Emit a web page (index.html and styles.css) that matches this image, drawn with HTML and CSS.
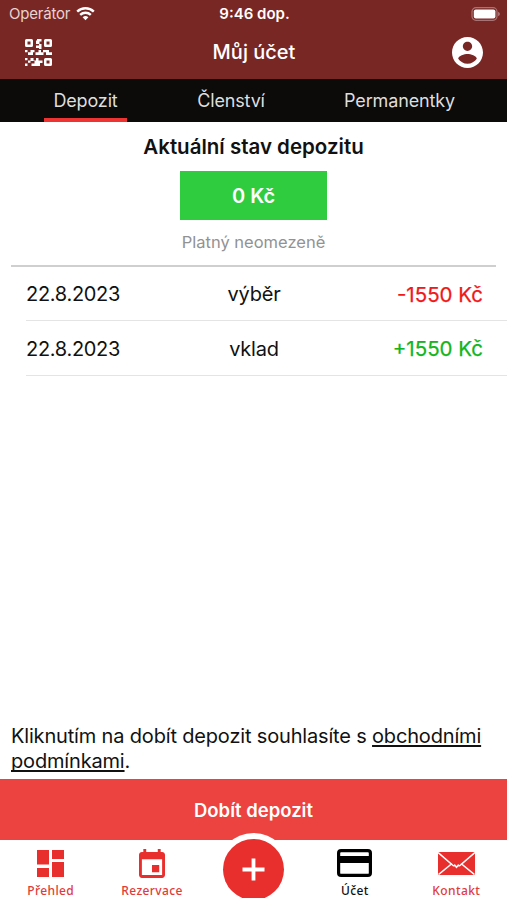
FILE: index.html
```html
<!DOCTYPE html>
<html lang="cs">
<head>
  <meta charset="UTF-8" />
  <meta name="viewport" content="width=device-width, initial-scale=1.0"/>
  <title>Můj účet</title>
  <link rel="stylesheet" href="styles.css">
</head>
<body>

  <header class="header">
    <div class="status-bar">
      <div class="carrier">
        <span>Operátor</span>
        <svg width="19" height="15" viewBox="0 0 19 15" fill="none" stroke="#fff" stroke-width="2.4">
          <path d="M1.2 5.6a12 12 0 0 1 16.6 0"/>
          <path d="M4.2 8.9a7.7 7.7 0 0 1 10.6 0"/>
          <path d="M9.5 14.2L6.6 11.3a4.2 4.2 0 0 1 5.8 0z" fill="#fff" stroke="none"/>
        </svg>
      </div>
      <span class="clock">9:46 dop.</span>
      <svg class="battery" width="31" height="14" viewBox="0 0 31 14">
        <rect x="3" y=".7" width="25" height="12.6" rx="4" fill="none" stroke="#a87372" stroke-width="1.2"/>
        <rect x="4.8" y="2.4" width="21.600" height="9.2" rx="2" fill="#fff"/>
        <path d="M29 4.8q2 .7 2 2.2t-2 2.2z" fill="#a87372"/>
      </svg>
    </div>
    <div class="title-bar">
      <svg width="27" height="27" viewBox="0 0 27 27" fill="#fff">
        <path fill-rule="evenodd" d="M1.5 0h5q1.500 0 1.500 1.500v5q0 1.500-1.500 1.500h-5q-1.500 0-1.500-1.500v-5q0-1.500 1.500-1.500zM2.500 2.500v3h3v-3z"/>
        <path fill-rule="evenodd" d="M20.500 0h5q1.500 0 1.500 1.500v5q0 1.500-1.500 1.500h-5q-1.500 0-1.500-1.500v-5q0-1.500 1.500-1.500zM21.500 2.500v3h3v-3z"/>
        <path fill-rule="evenodd" d="M20.500 19h5q1.500 0 1.500 1.500v5q0 1.500-1.500 1.500h-5q-1.500 0-1.500-1.500v-5q0-1.500 1.500-1.500zM21.500 21.500v3h3v-3z"/>
        <path d="M12 0h4.500v2.500h-2v2.500h-3.500v-3.500h1zM14 5h2.500v5h-2.500v-1h-3v-2.500h3zM0 11h2.500v2.300h-2.500zM5.500 11h4v2.300h-1.500v2.700h-5v-2.700h2.500zM10.500 13.300h3v-2.300h2.500v2.300h2.500v2.700h-8zM18 11h6v2.300h3v2.700h-6v-2.700h-3zM0 19h2.500v2.300h-2.500zM0 24.500h2.500v2.500h-2.500zM3 21.500h2.500v2.300h-2.500zM5.500 19h3v2.500h2.500v-2.500h2.500v2.500h4v2.500h-2.500v3h-8.500v-2.500h3v-2.500h-4z"/>
      </svg>
      <h1>Můj účet</h1>
      <svg width="31" height="31" viewBox="2 2 20 20" fill="#fff">
        <path d="M12 2C6.480 2 2 6.480 2 12s4.480 10 10 10 10-4.480 10-10S17.520 2 12 2zm0 3c1.660 0 3 1.340 3 3s-1.340 3-3 3-3-1.340-3-3 1.340-3 3-3zm0 14.200c-2.500 0-4.710-1.280-6-3.220.03-1.990 4-3.080 6-3.080 1.990 0 5.970 1.090 6 3.080-1.290 1.940-3.500 3.220-6 3.220z"/>
      </svg>
    </div>
  </header>

  <nav class="tabs">
    <a class="tab active">Depozit</a>
    <a class="tab membership">Členství</a>
    <a class="tab passes">Permanentky</a>
  </nav>

  <main class="content">
    <section class="deposit">
      <h2>Aktuální stav depozitu</h2>
      <div class="amount">0 Kč</div>
      <p class="validity">Platný neomezeně</p>
    </section>

    <ul class="history">
      <li>
        <span class="date">22.8.2023</span>
        <span class="type">výběr</span>
        <span class="sum minus">-1550 Kč</span>
      </li>
      <li>
        <span class="date">22.8.2023</span>
        <span class="type">vklad</span>
        <span class="sum plus">+1550 Kč</span>
      </li>
    </ul>

    <p class="terms">Kliknutím na dobít depozit souhlasíte s <span class="link">obchodními</span><br><span class="link">podmínkami</span>.</p>
  </main>

  <button class="charge">Dobít depozit</button>

  <footer class="bottom-nav">
    <a class="nav-item">
      <svg width="27" height="27" viewBox="0 0 27 27" fill="#e92f2e">
        <path d="M0 0h12v14.500h-12zM15 0h12v9h-12zM0 18h12v9h-12zM15 12h12v15h-12z"/>
      </svg>
      <span>Přehled</span>
    </a>
    <a class="nav-item">
      <svg width="26" height="29" viewBox="3 1 18 20" fill="#e92f2e">
        <path d="M17 12h-5v5h5v-5zM16 1v2H8V1H6v2H5c-1.110 0-1.990.9-1.990 2L3 19c0 1.100.89 2 2 2h14c1.100 0 2-.9 2-2V5c0-1.100-.9-2-2-2h-1V1h-2zm3 18H5V8h14v11z"/>
      </svg>
      <span>Rezervace</span>
    </a>
    <a class="nav-item add">
      <svg class="add-icon" width="74" height="65" viewBox="0 0 74 65">
        <circle cx="37.500" cy="36.500" r="36.500" fill="#fff"/>
        <circle cx="37.500" cy="36.500" r="30.500" fill="#e92f2e"/>
        <path d="M26.500 36.500h22M37.500 25.500v22" stroke="#fff" stroke-width="3.800"/>
      </svg>
    </a>
    <a class="nav-item current">
      <svg width="35" height="28" viewBox="0 0 35 28">
        <rect x="1.600" y="1.600" width="31.800" height="24.800" rx="2.500" fill="none" stroke="#000" stroke-width="3.200"/>
        <path d="M2 7h31v7h-31z"/>
      </svg>
      <span>Účet</span>
    </a>
    <a class="nav-item">
      <svg width="37" height="23" viewBox="0 0 37 23">
        <path d="M0 0h37v23h-37z" fill="#e92f2e"/>
        <path d="M0 .5l14.500 12.500q1.500 1.300 2.300.3l1.700 2 1.700-2q.8 1 2.300-.3L37 .5M.5 22.500l13.500-11M36.500 22.500l-13.500-11" fill="none" stroke="#fff" stroke-width="1.600"/>
      </svg>
      <span>Kontakt</span>
    </a>
  </footer>

</body>
</html>
```
FILE: styles.css
```css
* {
  box-sizing: border-box;
}

body {
  margin: 0;
  height: 900px;
  display: flex;
  flex-direction: column;
  font-family: Inter, "Liberation Sans", sans-serif;
  background: #fff;
  color: #111;
  overflow: hidden;
}

svg {
  display: block;
  flex: none;
}

h1, h2, p, ul {
  margin: 0;
  padding: 0;
}

.header {
  height: 79px;
  background: #792725;
  color: #fff;
}

.status-bar {
  height: 27px;
  padding: 0 7px 0 9px;
  display: grid;
  grid-template-columns: 1fr auto 1fr;
  align-items: center;
  font-size: 15px;
}

.carrier {
  display: flex;
  align-items: center;
  gap: 6px;
  color: #e6d3d2;
  letter-spacing: -0.2px;
}

.clock {
  font-weight: 600;
}

.battery {
  justify-self: end;
}

.title-bar {
  height: 50px;
  padding: 0 24px 0 25px;
  display: flex;
  align-items: center;
  justify-content: space-between;
}

.title-bar h1 {
  padding-left: 4px;
  font-size: 20px;
  font-weight: 500;
}

.tabs {
  height: 43px;
  background: #0c0b09;
  display: flex;
  padding-left: 44px;
}

.tab {
  height: 43px;
  line-height: 44px;
  font-size: 18px;
  letter-spacing: -0.15px;
  text-align: center;
  color: #dedede;
}

.tab.active {
  width: 83px;
  border-bottom: 4px solid #ed3432;
}

.tab.membership {
  width: 208px;
}

.tab.passes {
  width: 129px;
}

.content {
  flex: 1;
  display: flex;
  flex-direction: column;
}

.deposit {
  height: 145px;
  margin: 0 11px 0 11px;
  border-bottom: 2px solid #cfcfcf;
  display: flex;
  flex-direction: column;
  align-items: center;
}

.deposit h2 {
  height: 49px;
  line-height: 50px;
  font-size: 20.5px;
  font-weight: 600;
}

.amount {
  width: 147px;
  height: 49px;
  line-height: 50px;
  text-align: center;
  font-size: 20px;
  font-weight: 600;
  color: #fff;
  background: #30cc40;
}

.validity {
  line-height: 45px;
  font-size: 16.5px;
  color: #929292;
}

.history {
  list-style: none;
  margin-left: 26px;
}

.history li {
  height: 54px;
  padding: 1px 24px 0 0;
  display: grid;
  grid-template-columns: 150px 156px 1fr;
  align-items: center;
  font-size: 20px;
  border-bottom: 1px solid #e4e4e4;
}

.history li + li {
  height: 55px;
}

.date {
  letter-spacing: -0.3px;
}

.type {
  text-align: center;
  letter-spacing: -0.2px;
}

.sum {
  text-align: right;
  font-size: 20.5px;
  -webkit-text-stroke: 0.25px;
}

.minus {
  color: #f01818;
}

.plus {
  color: #12b51c;
}

.terms {
  margin: auto 11px 5px;
  font-size: 20px;
  line-height: 25px;
  letter-spacing: -0.17px;
  white-space: nowrap;
}

.link {
  text-decoration: underline;
  text-decoration-thickness: 1.5px;
  text-underline-offset: 2px;
  text-decoration-skip-ink: none;
}

.charge {
  height: 61px;
  padding: 0;
  border: 0;
  background: #ec4240;
  color: #fff;
  font-family: inherit;
  font-size: 18.5px;
  font-weight: 600;
}

.bottom-nav {
  height: 60px;
  display: grid;
  grid-template-columns: repeat(5, 1fr);
}

.nav-item {
  height: 60px;
  padding: 3px 0 2px;
  position: relative;
  display: flex;
  flex-direction: column;
  align-items: center;
  font-family: "Noto Sans", sans-serif;
  font-size: 12px;
  font-weight: 500;
  letter-spacing: 0.4px;
  color: #e13b3a;
}

.nav-item svg {
  margin: auto 0;
}

.nav-item span {
  line-height: 15px;
}

.nav-item.current {
  color: #111;
}

/* round button reaches over the red bar */
.nav-item .add-icon {
  position: absolute;
  top: -7px;
  margin: 0;
}
```
